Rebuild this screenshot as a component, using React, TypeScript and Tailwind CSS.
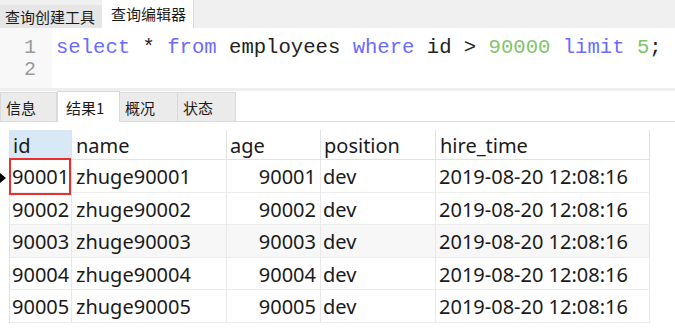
const rows = [
  { id: "90001", name: "zhuge90001", age: "90001", position: "dev", hire: "2019-08-20 12:08:16" },
  { id: "90002", name: "zhuge90002", age: "90002", position: "dev", hire: "2019-08-20 12:08:16" },
  { id: "90003", name: "zhuge90003", age: "90003", position: "dev", hire: "2019-08-20 12:08:16" },
  { id: "90004", name: "zhuge90004", age: "90004", position: "dev", hire: "2019-08-20 12:08:16" },
  { id: "90005", name: "zhuge90005", age: "90005", position: "dev", hire: "2019-08-20 12:08:16" },
];

const cjk = { fontFamily: '"Noto Sans CJK SC", sans-serif' };
const cell = { fontFamily: '"Noto Sans", "Noto Sans CJK SC", sans-serif' };
const mono = { fontFamily: '"Liberation Mono", monospace' };

export default function App() {
  return (
    <div className="w-[675px] h-[334px] bg-white overflow-hidden text-[#1a1a1a]">
      {/* top tabs */}
      <div className="h-[28px] bg-[#f0f0f0] flex items-end text-[15px]" style={cjk}>
        <div className="h-[23px] w-[102px] bg-[#e6e6e6] flex items-center pl-[5px] leading-none">
          查询创建工具
        </div>
        <div className="h-[28px] w-[92px] bg-white border-r border-[#d6d6d6] flex items-center pl-[9px] pb-[2px] leading-none">
          查询编辑器
        </div>
      </div>

      {/* editor */}
      <div className="h-[60px] flex">
        <div className="w-[52px] bg-[#f8f8f8] text-[#9a9a9a] text-[20px] leading-[22px] pt-[9px] pr-[16px] text-right" style={mono}>
          <div>1</div>
          <div>2</div>
        </div>
        <div className="pl-[4px] pt-[9px] text-[20.6px] leading-[22px] whitespace-pre text-[#222]" style={mono}>
          <span className="text-[#6b6bff]">select</span> * <span className="text-[#6b6bff]">from</span> employees{" "}
          <span className="text-[#6b6bff]">where</span> id &gt; <span className="text-[#7fc46a]">90000</span>{" "}
          <span className="text-[#6b6bff]">limit</span> <span className="text-[#7fc46a]">5</span>;
        </div>
      </div>
      <div className="h-[3px] bg-[#eeeeee]" />

      {/* result tabs */}
      <div className="h-[31px] flex items-end border-b border-[#dcdcdc] text-[15px]" style={cjk}>
        <div className="h-[29px] w-[57px] bg-[#ebebeb] border border-b-0 border-[#d9d9d9] flex items-center pl-[5px] leading-none">
          信息
        </div>
        <div className="h-[31px] w-[63px] bg-white border border-b-0 border-[#d9d9d9] -mb-px flex items-center pl-[8px] leading-none">
          结果1
        </div>
        <div className="h-[29px] w-[58px] bg-[#ebebeb] border border-b-0 border-l-0 border-[#d9d9d9] flex items-center pl-[5px] leading-none">
          概况
        </div>
        <div className="h-[29px] w-[58px] bg-[#ebebeb] border border-b-0 border-l-0 border-[#d9d9d9] flex items-center pl-[5px] leading-none">
          状态
        </div>
      </div>

      {/* grid */}
      <div className="flex mt-[8px] text-[20px]" style={cell}>
        <div className="w-[10px] border-r border-[#e2e2e2] flex flex-col">
          <div className="h-[30px]" />
          <div className="h-[32.5px] relative">
            <div className="absolute left-0 top-[13px] w-0 h-0 border-y-[5px] border-y-transparent border-l-[6px] border-l-black" />
          </div>
        </div>
        <div className="w-[640px] flex flex-col">
          <div className="h-[30px] flex border-b border-[#e2e2e2] leading-none">
            <div className="w-[62px] h-full bg-[#d9e8f7] border-r border-[#e2e2e2] flex items-center pl-[3px] pt-[3px]">id</div>
            <div className="w-[155px] h-full border-r border-[#e2e2e2] flex items-center pl-[4px] pt-[3px]">name</div>
            <div className="w-[94px] h-full border-r border-[#e2e2e2] flex items-center pl-[3px] pt-[3px]">age</div>
            <div className="w-[115px] h-full border-r border-[#e2e2e2] flex items-center pl-[3px] pt-[3px]">position</div>
            <div className="w-[214px] h-full border-r border-[#e2e2e2] flex items-center pl-[4px] pt-[3px]">hire_time</div>
          </div>
          {rows.map((r, i) => (
            <div
              key={r.id}
              className={`h-[32.5px] flex border-b border-[#ececec] leading-none ${i === 2 ? "bg-[#f7f7f7]" : "bg-white"}`}
            >
              <div className="w-[62px] h-full border-r border-[#e8e8e8] flex items-center pl-[2px] pt-[3px] relative">
                {r.id}
                {i === 0 && (
                  <div className="absolute left-[-1px] top-[-2px] w-[62px] h-[37px] border-2 border-[#e8302f]" />
                )}
              </div>
              <div className="w-[155px] h-full border-r border-[#e8e8e8] flex items-center pl-[4px] pt-[3px]">{r.name}</div>
              <div className="w-[94px] h-full border-r border-[#e8e8e8] flex items-center justify-end pr-[4px] pt-[3px]">{r.age}</div>
              <div className="w-[115px] h-full border-r border-[#e8e8e8] flex items-center pl-[2px] pt-[3px]">{r.position}</div>
              <div className="w-[214px] h-full border-r border-[#e8e8e8] flex items-center pl-[3px] pt-[3px]">{r.hire}</div>
            </div>
          ))}
        </div>
      </div>
    </div>
  );
}
